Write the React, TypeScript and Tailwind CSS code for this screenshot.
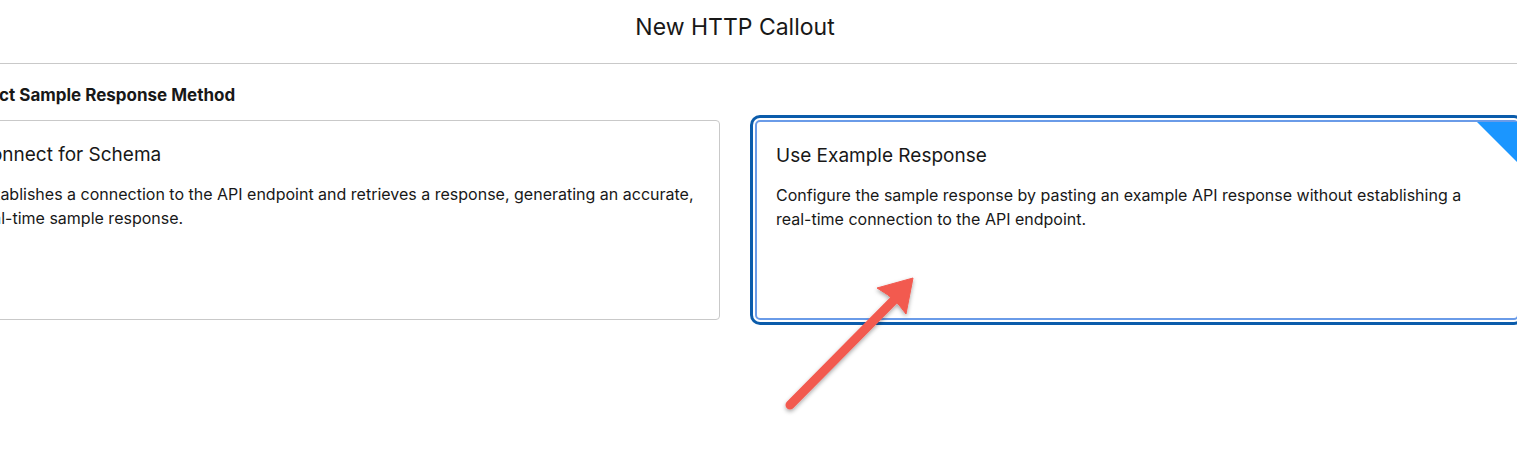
import type { ReactNode } from 'react';

const CARDS: { id: string; title: string; body: ReactNode; selected: boolean }[] = [
  {
    id: 'connect',
    title: 'Connect for Schema',
    body: (
      <>
        Establishes a connection to the API endpoint and retrieves a response, generating an accurate,{' '}
        <span className="whitespace-nowrap">real-time</span> sample response.
      </>
    ),
    selected: false,
  },
  {
    id: 'example',
    title: 'Use Example Response',
    body: (
      <>
        Configure the sample response by pasting an example API response without establishing a{' '}
        <span className="whitespace-nowrap">real-time</span> connection to the API endpoint.
      </>
    ),
    selected: true,
  },
];

function MethodCard({ title, body, selected }: { title: string; body: ReactNode; selected: boolean }) {
  return (
    <div
      className={`relative h-[200px] rounded-[4px] bg-white px-5 pt-[20px] ${
        selected
          ? 'border-2 border-[#6a9be8] px-[19px] pt-[19px] rounded-[5px] shadow-[0_0_0_2px_#ffffff,0_0_0_5px_#0b5cab]'
          : 'border border-[#c9c9c9]'
      }`}
    >
      {selected && (
        <span
          aria-hidden="true"
          className="absolute top-0 right-0 w-[40px] h-[40px] bg-[#1b96ff] [clip-path:polygon(0_0,100%_0,100%_100%)]"
        />
      )}
      <h3 className="text-[19px] leading-[28px] text-[#181818] font-normal">{title}</h3>
      <p className="mt-[13px] text-[16px] leading-[24px] text-[#181818]">{body}</p>
    </div>
  );
}

function Arrow() {
  return (
    <svg
      className="absolute left-0 top-0 pointer-events-none"
      width="1517"
      height="468"
      viewBox="0 0 1517 468"
      aria-hidden="true"
    >
      <defs>
        <filter id="arrow-shadow" x="-20%" y="-20%" width="140%" height="140%">
          <feDropShadow dx="0" dy="2" stdDeviation="2" floodColor="#000" floodOpacity="0.35" />
        </filter>
      </defs>
      <g filter="url(#arrow-shadow)" fill="#f25a50" stroke="#f25a50">
        <line x1="790" y1="405" x2="894" y2="300" strokeWidth="9" strokeLinecap="round" />
        <polygon points="913,278 877,288 888,295 899,305 906,314" strokeWidth="1" strokeLinejoin="round" />
      </g>
    </svg>
  );
}

export default function App() {
  return (
    <div className="relative w-full h-[468px] overflow-hidden bg-white font-['Inter',sans-serif] text-[#181818]">
      <div className="ml-[-70px] w-[1610px]">
        <header className="h-[64px] flex items-start justify-center pt-[12px] border-b border-[#c9c9c9]">
          <h2 className="text-[23px] leading-[30px] font-normal">New HTTP Callout</h2>
        </header>

        <div className="pl-[26px] pr-[21px] pt-[19px]">
          <p className="ml-[7px] text-[17px] leading-[24px] font-bold">Select Sample Response Method</p>
          <div className="mt-[13px] grid grid-cols-2 gap-[35px]">
            {CARDS.map((card) => (
              <MethodCard key={card.id} title={card.title} body={card.body} selected={card.selected} />
            ))}
          </div>
        </div>
      </div>
      <Arrow />
    </div>
  );
}
